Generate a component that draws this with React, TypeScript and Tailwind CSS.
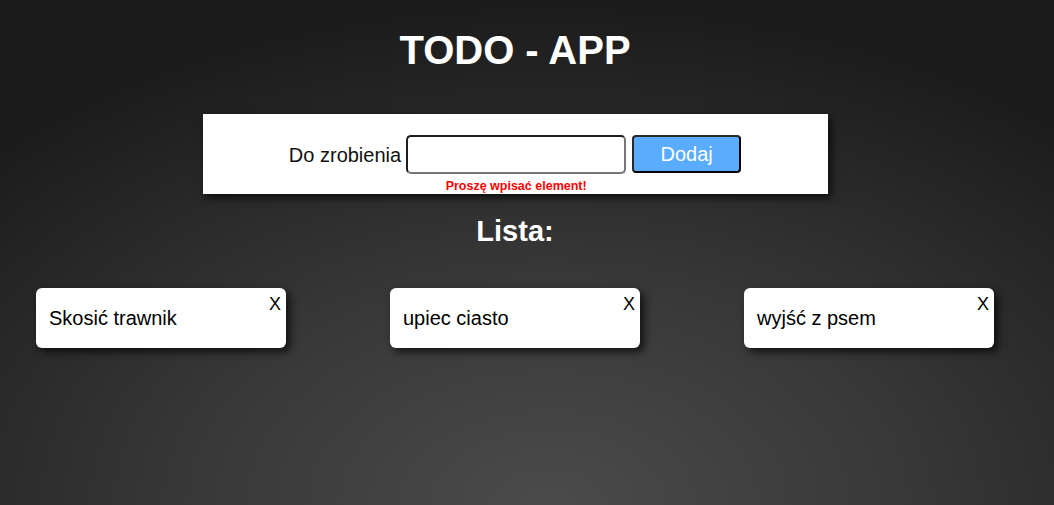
const todos = ["Skosić trawnik", "upiec ciasto", "wyjść z psem"];

function TodoCard({ text }: { text: string }) {
  return (
    <div className="relative flex h-[60px] w-[250px] items-center rounded-[6px] bg-white pl-[13px] shadow-[4px_4px_8px_rgba(0,0,0,0.7)]">
      <span className="text-[20px] text-black">{text}</span>
      <button
        type="button"
        className="absolute right-[5px] top-[7px] text-[18px] leading-none text-black"
      >
        X
      </button>
    </div>
  );
}

export default function App() {
  return (
    <div
      className="min-h-[505px] w-full bg-[radial-gradient(ellipse_75%_100%_at_52%_100%,#4b4b4b_0%,#383838_45%,#1b1b1b_100%)] font-['Liberation_Sans',Arial,sans-serif]"
    >
      <div className="flex w-[1030px] flex-col items-center">
        <h1 className="mt-[27px] text-[40px] font-bold leading-[46px] text-white">
          TODO - APP
        </h1>

        <div className="mt-[41px] flex h-[80px] w-[625px] justify-center bg-white pt-[21px] shadow-[3px_4px_8px_rgba(0,0,0,0.7)]">
          <label className="mr-[5px] mt-[9px] text-[20px] leading-[23px] text-[#111]">
            Do zrobienia
          </label>
          <div className="flex flex-col items-center">
            <input
              type="text"
              className="h-[39px] w-[220px] rounded-[5px] border-2 border-t-[#1e1e1e] border-l-[#1e1e1e] border-b-[#777] border-r-[#777] bg-white outline-none"
            />
            <span className="mt-[5px] text-[12.5px] font-bold leading-[14px] text-[#ff0000]">
              Proszę wpisać element!
            </span>
          </div>
          <button
            type="button"
            className="ml-[6px] h-[38px] w-[109px] rounded-[4px] border-2 border-[#2a2a2a] border-b-black border-r-black bg-[#5aacff] text-[20px] text-white"
          >
            Dodaj
          </button>
        </div>

        <h2 className="mt-[21px] text-[29px] font-bold leading-[33px] text-white">
          Lista:
        </h2>

        <div className="mt-[40px] flex gap-[104px]">
          {todos.map((t) => (
            <TodoCard key={t} text={t} />
          ))}
        </div>
      </div>
    </div>
  );
}
